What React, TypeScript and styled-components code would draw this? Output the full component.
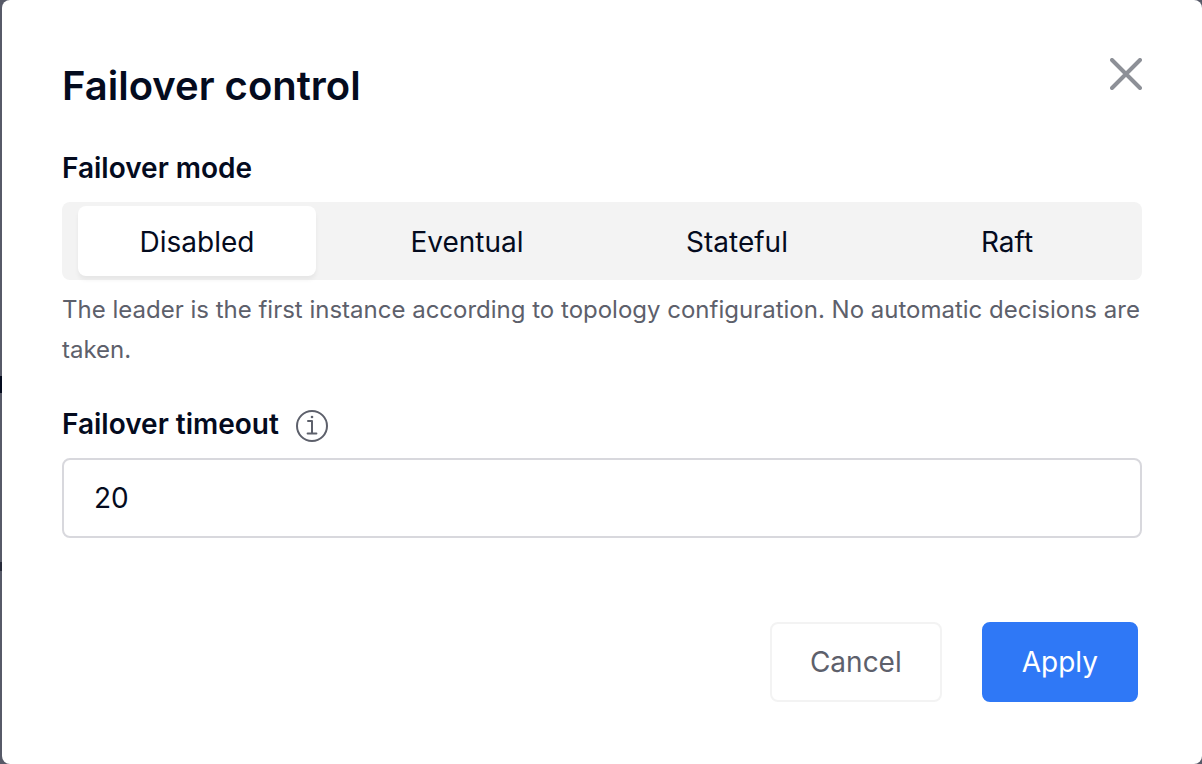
import React, { useState } from 'react';
import styled, { createGlobalStyle } from 'styled-components';

const ink = '#040b1e';
const muted = '#5d606b';

const GlobalStyle = createGlobalStyle`
  *, *::before, *::after { box-sizing: border-box; }
  body {
    margin: 0;
    background: #575a68;
    color: ${ink};
    font-family: Inter, "Liberation Sans", sans-serif;
  }
  button, input { font: inherit; color: inherit; }
`;

const Backdrop = styled.div`
  padding-left: 2px;
  background: linear-gradient(
    #575a68 376px, #040b1e 376px, #040b1e 393px, #575a68 393px,
    #575a68 562px, #262a3a 562px, #262a3a 571px, #575a68 571px
  );
`;

const Dialog = styled.form`
  padding: 56px 60px 62px;
  background: #fff;
  border-radius: 8px;
`;

const Header = styled.header`
  display: flex;
  justify-content: space-between;
  align-items: flex-start;
  margin-bottom: 32px;
`;

const Title = styled.h2`
  margin: 0;
  font-size: 40px;
  line-height: 60px;
  font-weight: 600;
`;

const CloseButton = styled.button`
  display: flex;
  margin-top: 2px;
  padding: 0;
  border: 0;
  background: none;
  cursor: pointer;
`;

const ModeGroup = styled.fieldset`
  margin: 0 0 34px;
  padding: 0;
  border: 0;
  min-width: 0;
`;

const labelText = `
  padding: 0;
  font-size: 28px;
  line-height: 40px;
  font-weight: 600;
`;

const Legend = styled.legend`
  ${labelText}
  margin-bottom: 14px;
`;

const Label = styled.label`
  ${labelText}
`;

const Segments = styled.div`
  display: grid;
  grid-template-columns: repeat(4, 1fr);
  background: #f3f3f3;
  border-radius: 8px;
`;

const Segment = styled.label<{ $active: boolean }>`
  margin: 4px 16px;
  border-radius: 8px;
  font-size: 28px;
  line-height: 70px;
  height: 70px;
  padding-top: 1px;
  text-align: center;
  cursor: pointer;
  background: ${({ $active }) => ($active ? '#fff' : 'transparent')};
  box-shadow: ${({ $active }) => ($active ? '0 4px 4px rgba(0, 0, 0, 0.05)' : 'none')};
`;

const HiddenRadio = styled.input`
  position: absolute;
  width: 1px;
  height: 1px;
  margin: 0;
  opacity: 0;
`;

const Hint = styled.p`
  margin: 10px 0 0;
  color: ${muted};
  font-size: 24px;
  line-height: 40px;
`;

const LabelRow = styled.div`
  display: flex;
  align-items: center;
  gap: 17px;
  margin-bottom: 14px;
`;

const InfoButton = styled.button`
  display: flex;
  margin-top: 4px;
  padding: 0;
  border: 0;
  background: none;
`;

const TextInput = styled.input`
  display: block;
  width: 100%;
  height: 80px;
  padding: 0 30px;
  border: 2px solid #d8d8dd;
  border-radius: 8px;
  background: #fff;
  font-size: 28px;
  outline: none;
`;

const Footer = styled.footer`
  display: flex;
  justify-content: flex-end;
  gap: 40px;
  margin-top: 84px;
  padding-right: 4px;
`;

const Button = styled.button<{ $primary?: boolean }>`
  height: 80px;
  padding: 0 38px;
  border: 2px solid ${({ $primary }) => ($primary ? '#2f78f6' : '#f3f3f3')};
  border-radius: 8px;
  background: ${({ $primary }) => ($primary ? '#2f78f6' : '#fff')};
  color: ${({ $primary }) => ($primary ? '#fff' : muted)};
  font-size: 28px;
  line-height: 40px;
  cursor: pointer;
`;

const modes = ['Disabled', 'Eventual', 'Stateful', 'Raft'];

export default function App() {
  const [mode, setMode] = useState('Disabled');
  const [timeout, setTimeoutValue] = useState('20');

  return (
    <>
      <GlobalStyle />
      <Backdrop>
        <Dialog role="dialog" aria-labelledby="title" onSubmit={(e) => e.preventDefault()}>
          <Header>
            <Title id="title">Failover control</Title>
            <CloseButton type="button" aria-label="Close">
              <svg width="32" height="32" viewBox="0 0 32 32" fill="none" stroke="#8d9097" strokeWidth="4" strokeLinecap="round">
                <path d="M2 2 30 30M30 2 2 30" />
              </svg>
            </CloseButton>
          </Header>

          <ModeGroup>
            <Legend>Failover mode</Legend>
            <Segments>
              {modes.map((name) => (
                <Segment key={name} $active={mode === name}>
                  <HiddenRadio type="radio" name="mode" value={name} checked={mode === name} onChange={() => setMode(name)} />
                  {name}
                </Segment>
              ))}
            </Segments>
            <Hint>
              The leader is the first instance according to topology configuration. No automatic decisions are taken.
            </Hint>
          </ModeGroup>

          <LabelRow>
            <Label htmlFor="timeout">Failover timeout</Label>
            <InfoButton type="button" aria-label="About failover timeout">
              <svg width="32" height="32" viewBox="0 0 32 32" fill="none" stroke={muted} strokeWidth="2">
                <circle cx="16" cy="16" r="15" />
                <path d="M12 11h4v12.4M11.6 23.4h8.8" strokeLinecap="round" strokeLinejoin="round" />
                <circle cx="16" cy="7" r="1.3" fill={muted} stroke="none" />
              </svg>
            </InfoButton>
          </LabelRow>
          <TextInput id="timeout" type="text" inputMode="numeric" value={timeout} onChange={(e) => setTimeoutValue(e.target.value)} />

          <Footer>
            <Button type="button">Cancel</Button>
            <Button type="submit" $primary>Apply</Button>
          </Footer>
        </Dialog>
      </Backdrop>
    </>
  );
}
